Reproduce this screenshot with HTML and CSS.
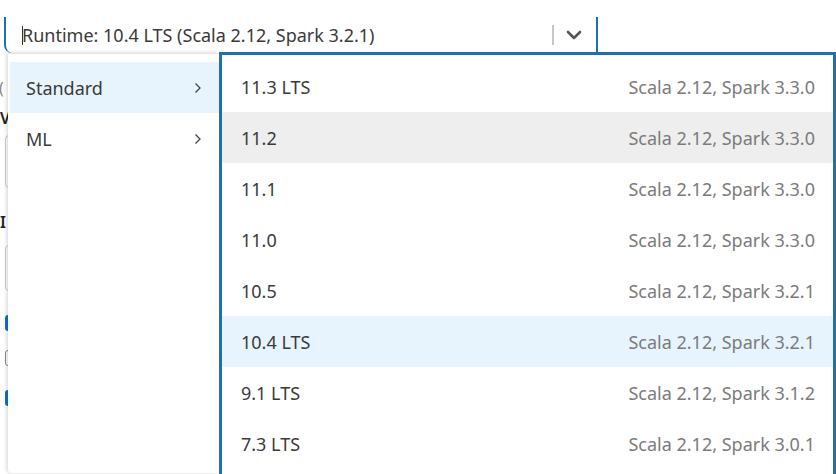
FILE: index.html
```html
<!DOCTYPE html>
<html>
<head>
<meta charset="utf-8">
<link rel="stylesheet" href="styles.css">
</head>
<body>
<div class="page">
  <div class="select">
    <span class="caret"></span>
    <span class="select-text">Runtime: 10.4 LTS (Scala 2.12, Spark 3.2.1)</span>
    <span class="sep"></span>
    <svg class="chev" width="16" height="10" viewBox="0 0 16 10"><path d="M2 2 L8 8 L14 2" fill="none" stroke="#555" stroke-width="2.6" stroke-linecap="round" stroke-linejoin="round"/></svg>
  </div>
  <div class="form">
    <span class="f-paren f1">(</span>
    <span class="f-label f2">V</span>
    <span class="f-input f3"></span>
    <span class="f-label f4">I</span>
    <span class="f-input f5"></span>
    <span class="f-check f6"></span>
    <span class="f-box f7"></span>
    <span class="f-check f8"></span>
  </div>

  <div class="menu">
    <div class="cats">
      <div class="cat active"><span>Standard</span><svg width="8" height="12" viewBox="0 0 8 12"><path d="M1.5 1.5 L6 6 L1.5 10.5" fill="none" stroke="#444" stroke-width="1.3"/></svg></div>
      <div class="cat"><span>ML</span><svg width="8" height="12" viewBox="0 0 8 12"><path d="M1.5 1.5 L6 6 L1.5 10.5" fill="none" stroke="#444" stroke-width="1.3"/></svg></div>
    </div>
    <div class="list">
      <div class="row"><span class="ver">11.3 LTS</span><span class="desc">Scala 2.12, Spark 3.3.0</span></div>
      <div class="row hover"><span class="ver">11.2</span><span class="desc">Scala 2.12, Spark 3.3.0</span></div>
      <div class="row"><span class="ver">11.1</span><span class="desc">Scala 2.12, Spark 3.3.0</span></div>
      <div class="row"><span class="ver">11.0</span><span class="desc">Scala 2.12, Spark 3.3.0</span></div>
      <div class="row"><span class="ver">10.5</span><span class="desc">Scala 2.12, Spark 3.2.1</span></div>
      <div class="row selected"><span class="ver">10.4 LTS</span><span class="desc">Scala 2.12, Spark 3.2.1</span></div>
      <div class="row"><span class="ver">9.1 LTS</span><span class="desc">Scala 2.12, Spark 3.1.2</span></div>
      <div class="row"><span class="ver">7.3 LTS</span><span class="desc">Scala 2.12, Spark 3.0.1</span></div>
    </div>
  </div>
</div>
</body>
</html>
```

FILE: styles.css
```css
* { box-sizing: border-box; }
html, body { margin: 0; padding: 0; background: #fff; }
body { font-family: "Noto Sans", "Open Sans", sans-serif; color: #333; overflow: hidden; }
.page { position: relative; width: 836px; height: 474px; overflow: hidden; }

.select {
  margin: 17px 0 0 4px;
  width: 594px;
  height: 36px;
  border-left: 2px solid #1f6fb5;
  border-right: 2px solid #1f6fb5;
  border-bottom-left-radius: 8px;
  display: flex;
  align-items: center;
  padding-left: 16px;
  padding-right: 14px;
}
.caret { width: 1px; height: 19px; background: #333; margin-right: -1px; }
.select-text { font-size: 18px; color: #3a3a3a; flex: 1; white-space: nowrap; }
.sep { width: 2px; height: 20px; background: #c8c8c8; margin-right: 12px; }
.chev { display: block; }

.form { position: relative; height: 420px; }
.form span { position: absolute; line-height: 16px; }
.f-paren { left: -1px; top: 27px; font-size: 16px; color: #888; }
.f-label { left: 0; font-size: 16px; font-weight: 600; color: #222; }
.f2 { top: 57px; }
.f4 { top: 161px; }
.f-input { left: 5px; width: 40px; border: 1px solid #ccc; border-radius: 4px; }
.f3 { top: 82px; height: 53px; }
.f5 { top: 192px; height: 46px; }
.f-check { left: 5px; width: 16px; height: 16px; border-radius: 3px; background: #0b6fe8; }
.f6 { top: 262px; }
.f8 { top: 337px; }
.f-box { left: 5px; top: 297px; width: 16px; height: 16px; border-radius: 3px; border: 1.5px solid #888; }

.menu {
  position: absolute;
  left: 8px;
  top: 52px;
  right: 0;
  bottom: 0;
  display: flex;
}
.cats {
  width: 211px;
  background: #fff;
  box-shadow: -1px 0 4px rgba(0,0,0,0.18);
  border-top: 1px solid #e6e6e6;
  border-bottom-left-radius: 4px;
  padding: 8px 0 0 2px;
  margin-top: 1px;
  margin-bottom: 1px;
}
.cat {
  height: 51px;
  display: flex;
  align-items: center;
  justify-content: space-between;
  padding: 0 17px 0 16px;
  font-size: 18px;
  color: #3a3a3a;
}
.cat svg { display: block; }
.cat.active { background: #e8f4fd; }

.list {
  flex: 1;
  border: 3px solid #1f6fb5;
  border-bottom: none;
  padding-top: 6px;
  background: #fff;
}
.row {
  height: 51px;
  display: flex;
  align-items: center;
  justify-content: space-between;
  padding: 0 18px 0 19px;
  font-size: 18px;
}
.row.hover { background: #eeeeee; }
.row.selected { background: #e8f4fd; }
.ver { color: #3a3a3a; }
.desc { color: #7b7b7b; }
```
